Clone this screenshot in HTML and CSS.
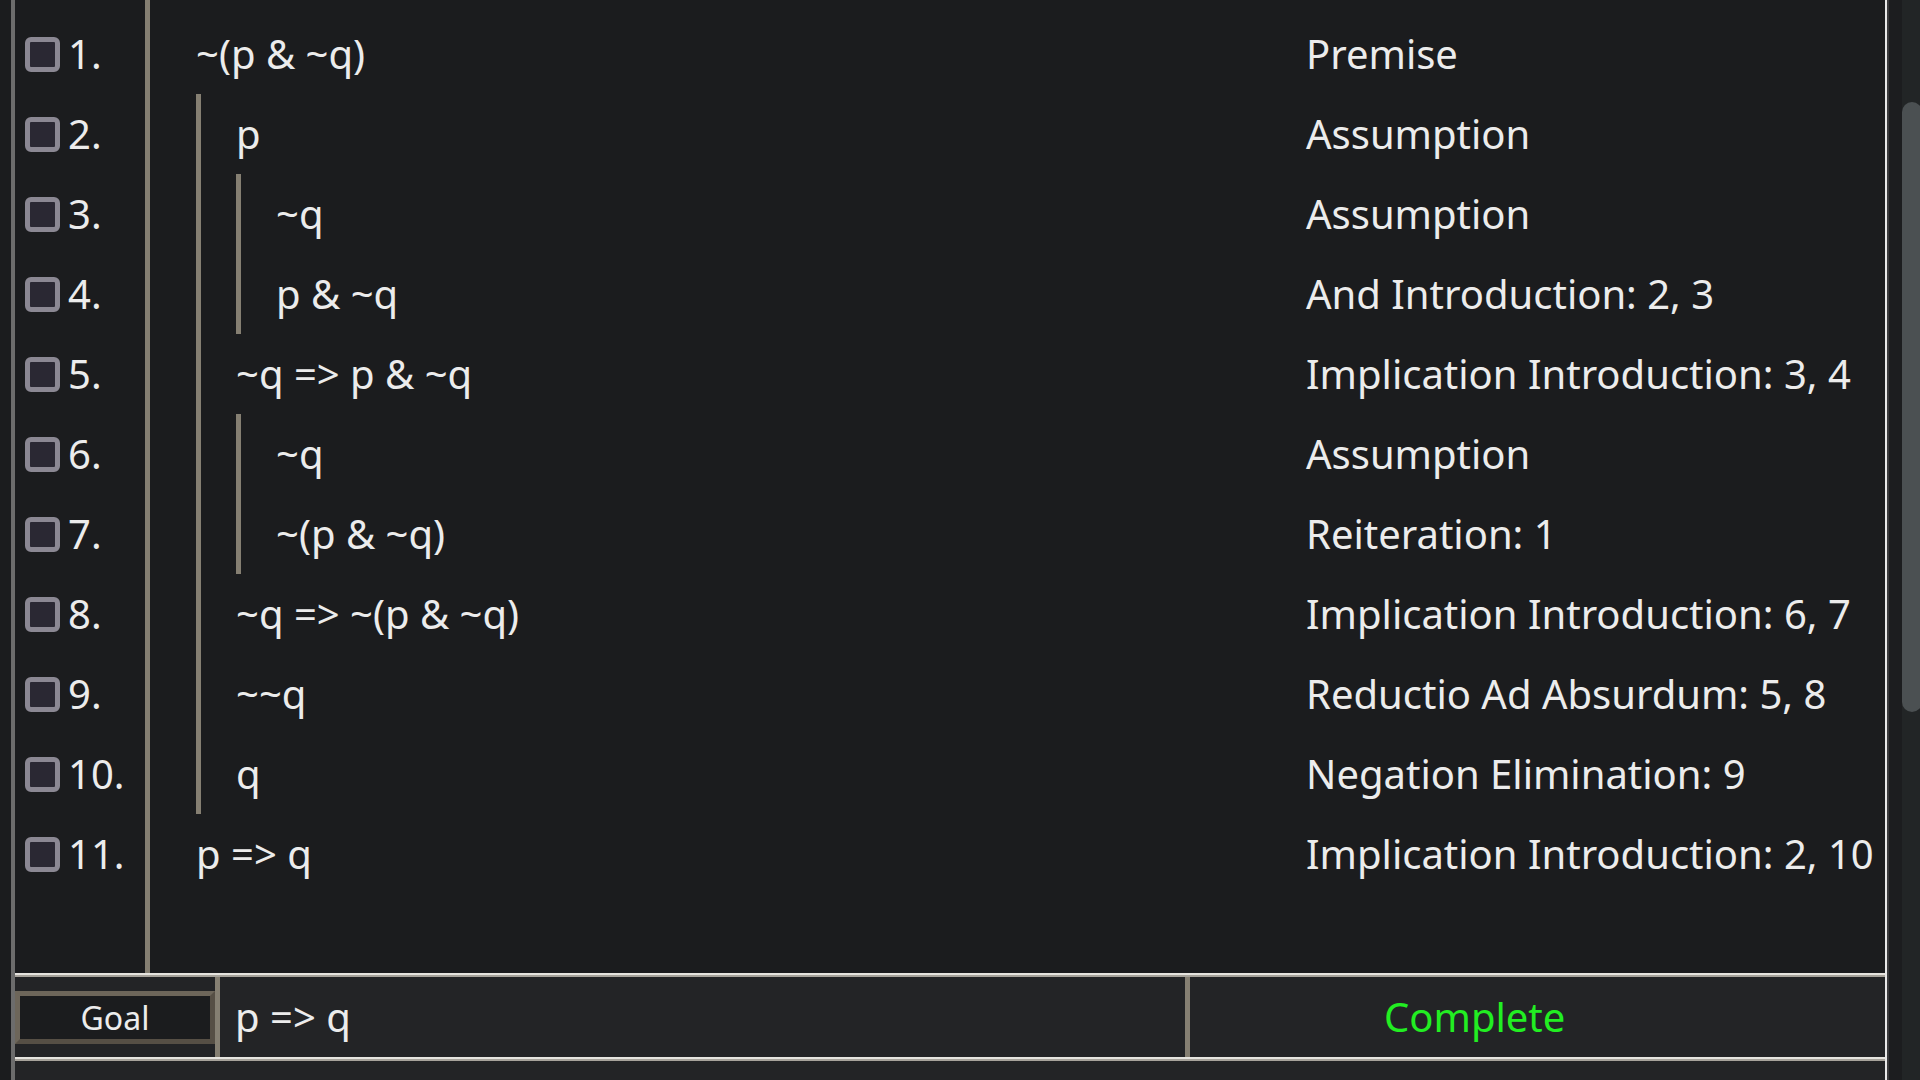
FILE: index.html
```html
<!DOCTYPE html>
<html>
<head>
<meta charset="utf-8">
<link rel="stylesheet" href="styles.css">
</head>
<body>
<div class="app">
  <div class="frame">
    <div class="proof">
      <div class="nums">
        <div class="num"><span class="box"></span><span>1.</span></div>
        <div class="num"><span class="box"></span><span>2.</span></div>
        <div class="num"><span class="box"></span><span>3.</span></div>
        <div class="num"><span class="box"></span><span>4.</span></div>
        <div class="num"><span class="box"></span><span>5.</span></div>
        <div class="num"><span class="box"></span><span>6.</span></div>
        <div class="num"><span class="box"></span><span>7.</span></div>
        <div class="num"><span class="box"></span><span>8.</span></div>
        <div class="num"><span class="box"></span><span>9.</span></div>
        <div class="num"><span class="box"></span><span>10.</span></div>
        <div class="num"><span class="box"></span><span>11.</span></div>
      </div>
      <div class="formulas">
        <div class="line">~(p &amp; ~q)</div>
        <div class="sub">
          <div class="line">p</div>
          <div class="sub">
            <div class="line">~q</div>
            <div class="line">p &amp; ~q</div>
          </div>
          <div class="line">~q =&gt; p &amp; ~q</div>
          <div class="sub">
            <div class="line">~q</div>
            <div class="line">~(p &amp; ~q)</div>
          </div>
          <div class="line">~q =&gt; ~(p &amp; ~q)</div>
          <div class="line">~~q</div>
          <div class="line">q</div>
        </div>
        <div class="line">p =&gt; q</div>
      </div>
      <div class="rules">
        <div class="line">Premise</div>
        <div class="line">Assumption</div>
        <div class="line">Assumption</div>
        <div class="line">And Introduction: 2, 3</div>
        <div class="line">Implication Introduction: 3, 4</div>
        <div class="line">Assumption</div>
        <div class="line">Reiteration: 1</div>
        <div class="line">Implication Introduction: 6, 7</div>
        <div class="line">Reductio Ad Absurdum: 5, 8</div>
        <div class="line">Negation Elimination: 9</div>
        <div class="line">Implication Introduction: 2, 10</div>
      </div>
    </div>
    <div class="rule-sep"></div>
    <div class="goalbar">
      <div class="goal-cell"><div class="goal-btn">Goal</div></div>
      <div class="goal-formula">p =&gt; q</div>
      <div class="goal-status">Complete</div>
    </div>
    <div class="rule-sep"></div>
    <div class="footer"></div>
  </div>
  <div class="scrollbar">
    <div class="track"><div class="thumb"></div></div>
  </div>
</div>
</body>
</html>
```
FILE: styles.css
```css
* { box-sizing: border-box; }
html, body {
  margin: 0;
  padding: 0;
  background: #1b1c1e;
  color: #ececec;
  font-family: "Noto Sans", "Open Sans", sans-serif;
  font-size: 40px;
}
.app {
  display: flex;
  width: 1920px;
  height: 1080px;
  overflow: hidden;
  padding-left: 11px;
}
.frame {
  width: 1876px;
  height: 1080px;
  display: flex;
  flex-direction: column;
  border-left: 4px solid #6c6c6c;
  border-right: 2px solid #e8e8e8;
  background: #1b1c1e;
}
.proof {
  height: 973px;
  display: flex;
  flex: none;
}
.nums {
  width: 135px;
  border-right: 5px solid #857f72;
  padding-top: 14px;
  flex: none;
}
.num {
  height: 80px;
  display: flex;
  align-items: center;
  gap: 8px;
  padding-left: 10px;
  line-height: 80px;
}
.box {
  width: 35px;
  height: 35px;
  border: 5px solid #8b8893;
  background: #2a2833;
  border-radius: 6px;
  flex: none;
}
.formulas {
  flex: 1;
  padding-top: 14px;
  padding-left: 46px;
}
.line {
  height: 80px;
  line-height: 80px;
  white-space: nowrap;
}
.sub {
  border-left: 5px solid #857f72;
  padding-left: 35px;
}
.rules {
  width: 579px;
  flex: none;
  padding-top: 14px;
}
.rule-sep {
  height: 4px;
  flex: none;
  background: linear-gradient(#e6e4df 0 50%, #a7a39b 50% 100%);
}
.goalbar {
  height: 80px;
  flex: none;
  display: flex;
  background: #232426;
  line-height: 80px;
}
.goal-cell {
  width: 205px;
  flex: none;
  border-right: 5px solid #857f72;
  display: flex;
  align-items: center;
}
.goal-btn {
  width: 200px;
  height: 53px;
  border: 5px solid;
  border-color: #6d665a #564f45 #564f45 #6d665a;
  background: #1b1c1e;
  font-size: 32px;
  line-height: 43px;
  text-align: center;
}
.goal-formula {
  width: 970px;
  flex: none;
  padding-left: 15px;
  border-right: 5px solid #857f72;
}
.goal-status {
  flex: 1;
  color: #22ee22;
  padding-left: 194px;
}
.footer {
  flex: 1;
  background: #232426;
}
.scrollbar {
  width: 33px;
  height: 1080px;
  flex: none;
  background: #1c1d1f;
  padding-left: 13px;
  border-left: 2px solid #3a3a3c;
}
.track {
  width: 20px;
  height: 100%;
  background: #222526;
  padding-top: 102px;
}
.thumb {
  width: 20px;
  height: 610px;
  background: #4b5052;
  border-radius: 10px;
}
```
